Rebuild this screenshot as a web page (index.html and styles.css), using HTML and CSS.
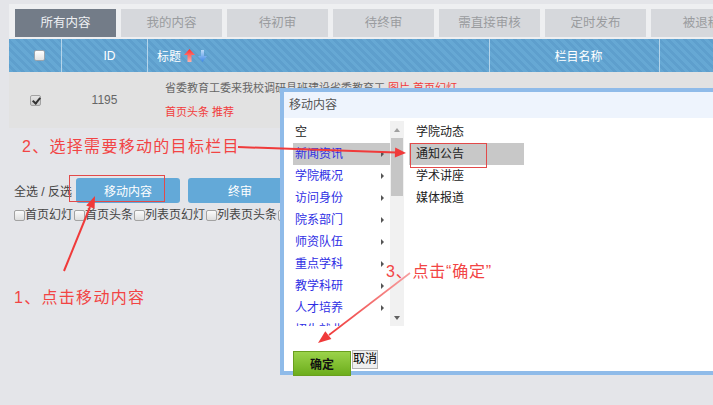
FILE: index.html
```html
<!DOCTYPE html>
<html lang="zh-CN">

<head>
    <meta charset="UTF-8">
    <meta name="viewport" content="width=device-width, initial-scale=1.0">
    <title>内容管理</title>
    <link rel="stylesheet" href="styles.css">
</head>

<body>

    <div class="page">
        <div class="tabs">
            <div class="tab active">所有内容</div>
            <div class="tab">我的内容</div>
            <div class="tab">待初审</div>
            <div class="tab">待终审</div>
            <div class="tab">需直接审核</div>
            <div class="tab">定时发布</div>
            <div class="tab">被退稿</div>
        </div>

        <div class="grid head">
            <div class="cell box-col"><span class="cb head-cb"></span></div>
            <div class="cell center id-col">ID</div>
            <div class="cell title-h">标题
                <svg class="sort" width="11" height="13" viewBox="0 0 11 13">
                    <defs>
                        <linearGradient id="up" x1="0" y1="0" x2="0" y2="1">
                            <stop offset="0" stop-color="#ff2a2a" />
                            <stop offset="1" stop-color="#ffb3aa" />
                        </linearGradient>
                    </defs>
                    <path d="M5.5 0 L11 6 H7.5 V13 H3.5 V6 H0 Z" fill="url(#up)" />
                </svg>
                <svg class="sort" width="9" height="12" viewBox="0 0 9 12">
                    <defs>
                        <linearGradient id="down" x1="0" y1="0" x2="0" y2="1">
                            <stop offset="0" stop-color="#bcdaf8" />
                            <stop offset="1" stop-color="#3f88e6" />
                        </linearGradient>
                    </defs>
                    <path d="M3 0 H6 V6 H9 L4.5 12 L0 6 H3 Z" fill="url(#down)" />
                </svg>
            </div>
            <div class="cell center col-name">栏目名称</div>
            <div class="cell"></div>
        </div>

        <div class="grid row">
            <div class="cell row-box"><span class="cb checked"></span></div>
            <div class="cell center num">1195</div>
            <div class="cell title">
                <div>省委教育工委来我校调研具班建设省委教育工 <span class="red">图片 首页幻灯</span></div>
                <div class="red">首页头条 推荐</div>
            </div>
            <div class="cell"></div>
            <div class="cell"></div>
        </div>

        <div class="toolbar">
            <span class="select">全选 / 反选</span>
            <button class="btn" type="button">移动内容</button>
            <button class="btn" type="button">终审</button>
        </div>

        <div class="flags">
            <label><span class="cb"></span>首页幻灯</label>
            <label><span class="cb"></span>首页头条</label>
            <label><span class="cb"></span>列表页幻灯</label>
            <label><span class="cb"></span>列表页头条</label>
            <label><span class="cb"></span></label>
        </div>
    </div>

    <!-- move dialog -->
    <div class="dialog">
        <div class="dialog-title">移动内容</div>
        <div class="dialog-body">
            <div class="lists">
                <ul class="menu-left">
                    <li class="empty">空</li>
                    <li class="on">新闻资讯</li>
                    <li>学院概况</li>
                    <li>访问身份</li>
                    <li>院系部门</li>
                    <li>师资队伍</li>
                    <li>重点学科</li>
                    <li>教学科研</li>
                    <li>人才培养</li>
                    <li>招生就业</li>
                </ul>
                <div class="scroll">
                    <span class="arr arr-up"></span>
                    <span class="thumb"></span>
                    <span class="arr arr-down"></span>
                </div>
                <ul class="menu-right">
                    <li>学院动态</li>
                    <li class="on">通知公告</li>
                    <li>学术讲座</li>
                    <li>媒体报道</li>
                </ul>
            </div>
            <div class="actions">
                <button class="ok" type="button">确定</button>
                <button class="cancel" type="button">取消</button>
            </div>
        </div>
    </div>

    <!-- red hints drawn on top -->
    <div class="notes">
        <span class="note note2">2、选择需要移动的目标栏目</span>
        <span class="note note1">1、点击移动内容</span>
        <span class="note note3">3、点击“确定”</span>
        <span class="mark mark-btn"></span>
        <span class="mark mark-item"></span>
        <svg class="lines" width="713" height="405" viewBox="0 0 713 405">
            <defs>
                <linearGradient id="fade" gradientUnits="userSpaceOnUse" x1="410" y1="273" x2="330" y2="335">
                    <stop offset="0" stop-color="#f7a0a0" />
                    <stop offset="1" stop-color="#f03a3a" />
                </linearGradient>
            </defs>
            <line x1="64" y1="271" x2="90" y2="207" stroke="#f03a3a" stroke-width="2" />
            <polygon points="95,196 94.6,208.8 86.2,205.4" fill="#f03a3a" />

            <line x1="238" y1="147" x2="396" y2="152.5" stroke="#f03a3a" stroke-width="2" />
            <polygon points="406,153 395.2,147.6 394.8,157.6" fill="#f03a3a" />

            <line x1="410" y1="273" x2="329" y2="335" stroke="url(#fade)" stroke-width="1.6" />
            <polygon points="318,343 331.4,339.1 325.3,331.2" fill="#f03a3a" />
        </svg>
    </div>

</body>

</html>
```

FILE: styles.css
```css
* {
    box-sizing: border-box;
}

body {
    margin: 0;
    width: 713px;
    height: 405px;
    overflow: hidden;
    position: relative;
    background: #e4e5e9;
    font-family: "Liberation Sans", "Noto Sans CJK SC", sans-serif;
    font-size: 12px;
    color: #333;
}

ul {
    list-style: none;
    margin: 0;
    padding: 0;
}

.page {
    padding: 4px 0 0 9px;
}

/* tabs */
.tabs {
    display: flex;
    gap: 5px;
    padding: 5px 0 2px 6px;
    background: #eeeff1;
    overflow: hidden;
}

.tab {
    flex: 0 0 101px;
    height: 28px;
    line-height: 28px;
    text-align: center;
    background: #d6d8dc;
    color: #9a9c9f;
    font-size: 12.5px;
}

.tab.active {
    background: #737c88;
    color: #eef0f3;
}

/* table */
.grid {
    display: grid;
    grid-template-columns: 52px 85px 341px 169px 1fr;
    column-gap: 1px;
}

.cell {
    display: flex;
    align-items: center;
    min-width: 0;
}

.center {
    justify-content: center;
}

.head {
    height: 33px;
    background: #b4d4ea;
}

.head .cell {
    background: repeating-linear-gradient(45deg, #66a8d4 0 3px, #5e9fcd 3px 6px);
    color: #fff;
}

.box-col {
    padding-left: 25px;
}

.id-col {
    padding-left: 10px;
}

.col-name {
    padding-left: 8px;
}

.title-h {
    padding-left: 9px;
}

.sort {
    display: block;
    margin-left: 3px;
}

.row {
    height: 56px;
    background: #e2e2e2;
}

.row-box {
    padding-left: 21px;
}

.num {
    color: #666;
}

.title {
    flex-direction: column;
    align-items: flex-start;
    justify-content: flex-start;
    padding: 4px 0 0 17px;
    font-size: 11px;
    line-height: 24px;
    color: #666;
    white-space: nowrap;
}

.red {
    color: #f23c3c;
}

/* checkboxes */
.cb {
    display: inline-block;
    width: 11px;
    height: 11px;
    border: 1px solid #a2a2a2;
    border-radius: 2px;
    background: linear-gradient(#fbfbfb, #dedede);
    position: relative;
    flex-shrink: 0;
}

.head-cb {
    border-color: #9aa4ad;
    background: linear-gradient(#ffffff, #e2e2e2);
}

.cb.checked {
    background: linear-gradient(#e4e4e4, #cacaca);
}

.cb.checked::after {
    content: "";
    position: absolute;
    left: 3px;
    top: 0;
    width: 3px;
    height: 6px;
    border-right: 2px solid #333;
    border-bottom: 2px solid #333;
    transform: rotate(40deg);
}

/* actions under the table */
.toolbar {
    display: flex;
    align-items: center;
    gap: 8px;
    margin-top: 50px;
    padding-left: 5px;
    height: 25px;
}

.select {
    width: 54px;
    color: #444;
    white-space: nowrap;
}

.btn {
    width: 104px;
    height: 25px;
    border: none;
    border-radius: 3px;
    background: #63a9d8;
    color: #fff;
    font: inherit;
    padding: 0;
}

.flags {
    display: flex;
    gap: 1px;
    margin-top: 5px;
    padding-left: 5px;
    color: #444;
    line-height: 14px;
}

.flags label {
    display: flex;
    align-items: center;
    white-space: nowrap;
}

/* dialog */
.dialog {
    position: absolute;
    left: 280px;
    top: 88px;
    width: 470px;
    height: 287px;
    border: 4px solid #8fbbe9;
    background: #fff;
}

.dialog-title {
    height: 26px;
    line-height: 26px;
    padding-left: 5px;
    background: #eef4fd;
    color: #555;
}

.dialog-body {
    padding: 3px 0 0 9px;
}

.lists {
    display: flex;
    height: 205px;
}

.menu-left {
    width: 97px;
    overflow: hidden;
}

.menu-left li {
    height: 22px;
    line-height: 22px;
    padding-left: 2px;
    color: #2e2ee4;
    position: relative;
}

.menu-left li::after {
    content: "";
    position: absolute;
    right: 6px;
    top: 8px;
    border-left: 3px solid #555;
    border-top: 3px solid transparent;
    border-bottom: 3px solid transparent;
}

.menu-left li.empty {
    color: #222;
}

.menu-left li.empty::after {
    display: none;
}

.menu-left li.on,
.menu-right li.on {
    background: #c8c8c8;
}

.scroll {
    width: 14px;
    background: #f1f1f1;
    position: relative;
}

.thumb {
    position: absolute;
    left: 1px;
    right: 1px;
    top: 17px;
    height: 58px;
    background: #c6c6c6;
}

.arr {
    position: absolute;
    left: 4px;
    border-left: 3px solid transparent;
    border-right: 3px solid transparent;
}

.arr-up {
    top: 7px;
    border-bottom: 4px solid #a0a0a0;
}

.arr-down {
    bottom: 6px;
    border-top: 4px solid #606060;
}

.menu-right {
    width: 115px;
    margin-left: 5px;
}

.menu-right li {
    height: 22px;
    line-height: 22px;
    padding-left: 7px;
    color: #222;
}

.actions {
    display: flex;
    align-items: flex-start;
    margin-top: 24px;
}

.ok {
    width: 58px;
    height: 25px;
    margin-top: 1px;
    padding: 0;
    border: 1px solid #6a9f1e;
    background: linear-gradient(#9bd34a, #6cad1c);
    color: #111;
    font: inherit;
    font-weight: bold;
}

.cancel {
    width: 26px;
    height: 19px;
    margin-left: 1px;
    padding: 0;
    border: 1px solid #b4b4b4;
    background: #efefef;
    color: #000;
    font: inherit;
    line-height: 17px;
    white-space: nowrap;
    overflow: visible;
}

/* hint layer */
.notes {
    position: absolute;
    inset: 0;
    pointer-events: none;
}

.note {
    position: absolute;
    font-size: 16px;
    line-height: 20px;
    letter-spacing: 1.3px;
    color: #f24444;
    white-space: nowrap;
}

.note2 {
    left: 22px;
    top: 137px;
}

.note1 {
    left: 14px;
    top: 288px;
}

.note3 {
    left: 386px;
    top: 262px;
    letter-spacing: 0.8px;
}

.mark {
    position: absolute;
    border: 1px solid #e24a4a;
}

.mark-btn {
    left: 69px;
    top: 175px;
    width: 96px;
    height: 27px;
}

.mark-item {
    left: 410px;
    top: 143px;
    width: 77px;
    height: 25px;
}

.lines {
    position: absolute;
    left: 0;
    top: 0;
}
```
